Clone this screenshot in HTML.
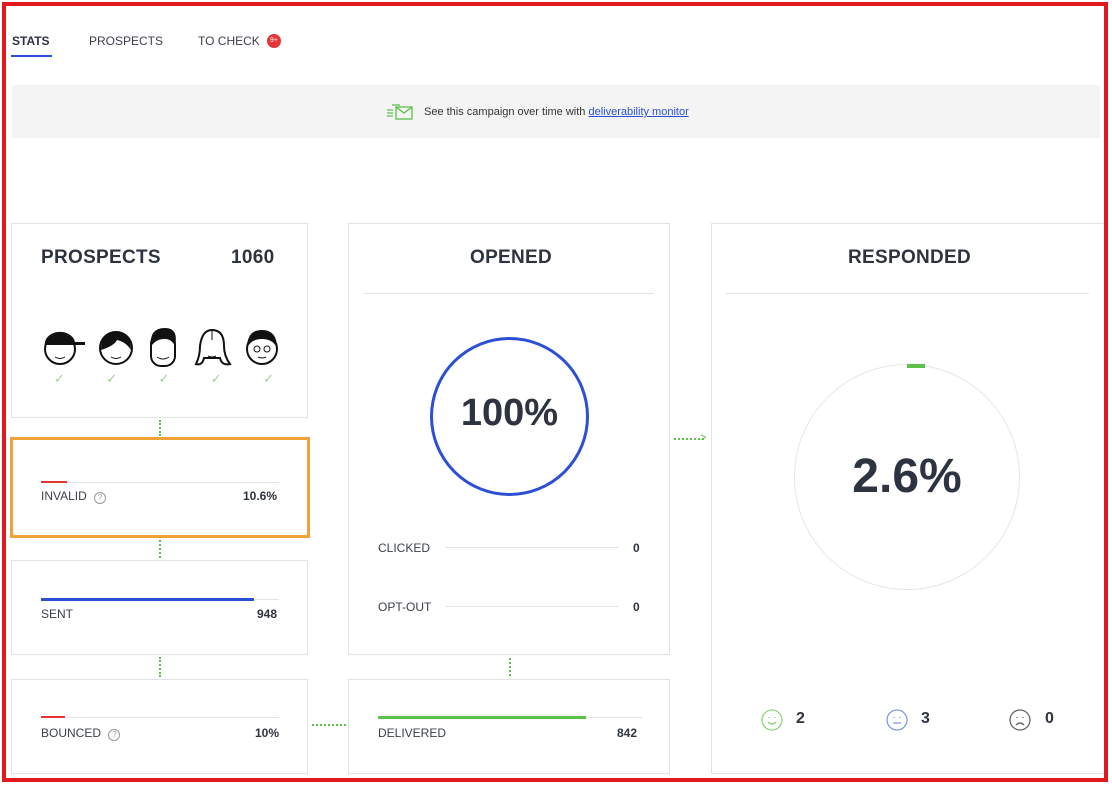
<!DOCTYPE html><html><head><style>
*{box-sizing:border-box;margin:0;padding:0}
body{width:1112px;height:785px;background:#fff;font-family:"Liberation Sans",sans-serif;color:#2d3340;position:relative;overflow:hidden}
.frame{position:absolute;left:2px;top:2px;width:1106px;height:780px;border:4px solid #e0191e;z-index:5}
.a{position:absolute}
.card{position:absolute;border:1px solid #e2e2e2;background:#fff}
.lbl{font-size:12px;color:#3a3f4a}
.num{font-size:12px;font-weight:bold}
.line{position:absolute;height:1px;background:#e4e4e4}
.dv{position:absolute;width:2px;border-left:2px dotted #5cc04a}
h2{font-size:19px;font-weight:bold;letter-spacing:.3px}
</style></head><body>
<div class="frame"></div>
<div class="a" style="left:12px;top:34px;font-size:12px;font-weight:bold">STATS</div>
<div class="a" style="left:11px;top:55px;width:41px;height:2px;background:#2c4fd6"></div>
<div class="a lbl" style="left:89px;top:34px">PROSPECTS</div>
<div class="a lbl" style="left:198px;top:34px">TO CHECK</div>
<div class="a" style="left:267px;top:34px;width:14px;height:14px;border-radius:50%;background:#e63333;color:#fff;font-size:7px;text-align:center;line-height:14px">9+</div>
<div class="a" style="left:12px;top:85px;width:1088px;height:53px;background:#f4f4f4"></div>
<svg class="a" style="left:386px;top:103px" width="28" height="18" viewBox="0 0 28 18" fill="none" stroke="#5cc04a" stroke-width="1.3"><rect x="10" y="4" width="16" height="12"/><path d="M10 4l8 6 8-6M1 7h6M1 10h6M1 13h6M6 2h8"/></svg>
<div class="a" style="left:424px;top:106px;font-size:11px;color:#333">See this campaign over time with <span style="color:#2c4fd6;text-decoration:underline">deliverability monitor</span></div>

<div class="card" style="left:11px;top:223px;width:297px;height:195px"></div>
<h2 class="a" style="left:41px;top:247px">PROSPECTS</h2>
<h2 class="a" style="left:231px;top:247px">1060</h2>
<div class="a" style="left:40px;top:326px;width:240px;height:45px;display:flex;justify-content:space-between">
<svg width="46" height="42" viewBox="0 0 46 42"><circle cx="20" cy="23" r="15" fill="#fff" stroke="#111" stroke-width="2"/><path d="M5 20a15 12 0 0 1 30-4h10v3H5z" fill="#111"/><path d="M15 31q5 3 10 0" stroke="#111" fill="none"/></svg>
<svg width="40" height="42" viewBox="0 0 40 42"><circle cx="20" cy="22" r="16" fill="#fff" stroke="#111" stroke-width="2"/><path d="M5 24q0-18 15-18t15 18q-5-8-14-10q-3 6-16 10z" fill="#111"/><path d="M15 31q5 3 10 0" stroke="#111" fill="none"/></svg>
<svg width="34" height="44" viewBox="0 0 34 44"><rect x="5" y="8" width="24" height="32" rx="10" fill="#fff" stroke="#111" stroke-width="2"/><path d="M5 20q-2-18 14-18q14 0 10 18q-4-8-12-7q-6 0-12 7z" fill="#111"/><path d="M11 31q6 4 12 0" stroke="#111" fill="none"/></svg>
<svg width="44" height="44" viewBox="0 0 44 44"><path d="M6 38q4-8 4-18q2-16 12-16q12 0 12 16q0 10 6 18q-8 2-10-6h-16q-2 8-8 6z" fill="#fff" stroke="#111" stroke-width="2"/><path d="M22 4v10" stroke="#111"/><path d="M18 30q4 2 8 0" stroke="#111" fill="none"/></svg>
<svg width="36" height="42" viewBox="0 0 36 42"><circle cx="18" cy="23" r="15" fill="#fff" stroke="#111" stroke-width="2"/><path d="M3 22q0-18 15-18t15 18q-4-9-15-9t-15 9z" fill="#111"/><circle cx="13" cy="23" r="3" fill="none" stroke="#111"/><circle cx="23" cy="23" r="3" fill="none" stroke="#111"/><path d="M14 31q4 2 8 0" stroke="#111" fill="none"/></svg>
</div>
<div class="a" style="left:54px;top:371px;width:220px;display:flex;justify-content:space-between;color:#9bd58e;font-size:13px"><span>✓</span><span>✓</span><span>✓</span><span>✓</span><span>✓</span></div>
<div class="dv" style="left:159px;top:420px;height:16px"></div>
<div class="a" style="left:10px;top:437px;width:300px;height:101px;border:3px solid #f0a236"></div>
<div class="a" style="left:41px;top:481px;width:26px;height:2px;background:#e63333"></div>
<div class="line" style="left:67px;top:482px;width:212px"></div>
<div class="a lbl" style="left:41px;top:489px">INVALID <span style="display:inline-block;width:12px;height:12px;border:1px solid #999;border-radius:50%;font-size:8px;text-align:center;line-height:10px;color:#999;margin-left:4px">?</span></div>
<div class="a num" style="left:243px;top:489px">10.6%</div>
<div class="dv" style="left:159px;top:540px;height:18px"></div>
<div class="card" style="left:11px;top:560px;width:297px;height:95px"></div>
<div class="a" style="left:41px;top:598px;width:213px;height:3px;background:#2c4fd6"></div>
<div class="line" style="left:254px;top:599px;width:25px"></div>
<div class="a lbl" style="left:41px;top:607px">SENT</div>
<div class="a num" style="left:257px;top:607px">948</div>
<div class="dv" style="left:159px;top:657px;height:20px"></div>
<div class="card" style="left:11px;top:679px;width:297px;height:95px"></div>
<div class="a" style="left:41px;top:716px;width:24px;height:2px;background:#e63333"></div>
<div class="line" style="left:65px;top:717px;width:214px"></div>
<div class="a lbl" style="left:41px;top:726px">BOUNCED <span style="display:inline-block;width:12px;height:12px;border:1px solid #999;border-radius:50%;font-size:8px;text-align:center;line-height:10px;color:#999;margin-left:4px">?</span></div>
<div class="a num" style="left:255px;top:726px">10%</div>
<div class="a" style="left:312px;top:724px;width:34px;border-top:2px dotted #5cc04a"></div>

<div class="card" style="left:348px;top:223px;width:322px;height:432px"></div>
<h2 class="a" style="left:470px;top:247px">OPENED</h2>
<div class="line" style="left:364px;top:293px;width:290px"></div>
<div class="a" style="left:430px;top:337px;width:159px;height:159px;border:3px solid #2c4fd6;border-radius:50%"></div>
<div class="a" style="left:430px;top:392px;width:159px;text-align:center;font-size:38px;font-weight:bold">100%</div>
<div class="a lbl" style="left:378px;top:541px">CLICKED</div>
<div class="line" style="left:445px;top:547px;width:174px"></div>
<div class="a num" style="left:633px;top:541px">0</div>
<div class="a lbl" style="left:378px;top:600px">OPT-OUT</div>
<div class="line" style="left:445px;top:606px;width:174px"></div>
<div class="a num" style="left:633px;top:600px">0</div>
<div class="dv" style="left:509px;top:658px;height:18px"></div>
<div class="card" style="left:348px;top:679px;width:322px;height:95px"></div>
<div class="a" style="left:378px;top:716px;width:208px;height:3px;background:#5cc04a"></div>
<div class="line" style="left:586px;top:717px;width:56px"></div>
<div class="a lbl" style="left:378px;top:726px">DELIVERED</div>
<div class="a num" style="left:617px;top:726px">842</div>
<div class="a" style="left:674px;top:438px;width:30px;border-top:2px dotted #5cc04a"></div>
<div class="a" style="left:700px;top:432px;color:#5cc04a;font-size:11px">&gt;</div>

<div class="card" style="left:711px;top:223px;width:396px;height:551px"></div>
<h2 class="a" style="left:848px;top:247px">RESPONDED</h2>
<div class="line" style="left:726px;top:293px;width:363px"></div>
<div class="a" style="left:794px;top:364px;width:226px;height:226px;border:1px solid #e6e6e6;border-radius:50%"></div>
<div class="a" style="left:907px;top:364px;width:18px;height:4px;background:#5cc04a"></div>
<div class="a" style="left:794px;top:449px;width:226px;text-align:center;font-size:48px;font-weight:bold">2.6%</div>
<svg class="a" style="left:761px;top:709px" width="22" height="22" viewBox="0 0 22 22" fill="none" stroke="#8bd47a" stroke-width="1.3"><circle cx="11" cy="11" r="10"/><path d="M7 13q4 4 8 0M8 8v1M14 8v1"/></svg>
<div class="a" style="left:796px;top:710px;font-size:16px;font-weight:bold">2</div>
<svg class="a" style="left:886px;top:709px" width="22" height="22" viewBox="0 0 22 22" fill="none" stroke="#7d96e6" stroke-width="1.3"><circle cx="11" cy="11" r="10"/><path d="M7 14h8M8 8v1M14 8v1"/></svg>
<div class="a" style="left:921px;top:710px;font-size:16px;font-weight:bold">3</div>
<svg class="a" style="left:1009px;top:709px" width="22" height="22" viewBox="0 0 22 22" fill="none" stroke="#666" stroke-width="1.3"><circle cx="11" cy="11" r="10"/><path d="M7 16q4-4 8 0M8 8v1M14 8v1"/></svg>
<div class="a" style="left:1045px;top:710px;font-size:16px;font-weight:bold">0</div>
</body></html>
